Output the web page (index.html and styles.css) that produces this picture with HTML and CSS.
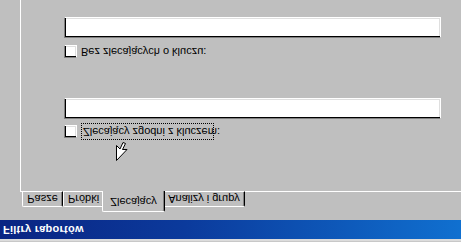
FILE: index.html
```html
<!DOCTYPE html>
<html lang="pl">
<head>
<meta charset="utf-8">
<title>Filtry raportów</title>
<link rel="stylesheet" href="styles.css">
</head>
<body>
<div class="screen">
  <div class="frame"></div>
  <div class="titlebar">Filtry raportów</div>
  <div class="tabs">
    <div class="tab t1">Pasze</div>
    <div class="tab t2">Próbki</div>
    <div class="tab sel">Zlecający</div>
    <div class="tab t4">Analizy i grupy</div>
  </div>
  <div class="panel">
    <div class="row row-a">
      <span class="check"></span>
      <span class="label focus">Zlecający zgodni z kluczem:</span>
    </div>
    <div class="field field-a"></div>
    <div class="row row-b">
      <span class="check"></span>
      <span class="label">Bez zlecających o kluczu:</span>
    </div>
    <div class="field field-b"></div>
    <svg class="cursor" width="13" height="20" viewBox="0 0 13 20">
      <path d="M0.5 0.5 L0.5 15.5 L4 12 L7 18.5 L9.5 17.5 L6.5 11.5 L11 11.5 Z" fill="#fff" stroke="#000" stroke-width="1" stroke-linejoin="miter"/>
    </svg>
  </div>
</div>
</body>
</html>
```

FILE: styles.css
```css
* { box-sizing: border-box; }
html, body {
  margin: 0;
  padding: 0;
  width: 461px;
  height: 242px;
  overflow: hidden;
  background: #c0c0c0;
}
.screen {
  width: 461px;
  height: 242px;
  display: flex;
  flex-direction: column;
  background: #bfbfbf;
  font-family: "Liberation Sans", Arial, sans-serif;
  font-size: 11px;
  color: #000;
  transform: scaleY(-1);
  overflow: hidden;
}
.frame {
  height: 3px;
  flex: none;
  background: #dcdcdc;
  border-top: 1px solid #c8c8c8;
}
.titlebar {
  height: 19px;
  flex: none;
  background: linear-gradient(to right, #0a2482 0%, #0b3a9c 40%, #1070d0 100%);
  color: #fff;
  font-weight: bold;
  font-size: 11px;
  letter-spacing: 0.25px;
  line-height: 19px;
  padding-left: 3px;
}
.tabs {
  flex: none;
  display: flex;
  align-items: flex-end;
  height: 21px;
  margin-top: 8px;
  padding-left: 22px;
  position: relative;
  z-index: 2;
  margin-bottom: -1px;
}
.tab {
  height: 16px;
  border-top: 1px solid #fff;
  border-left: 1px solid #fff;
  border-right: 1px solid #000;
  box-shadow: inset -1px 0 #808080;
  border-top-left-radius: 2px;
  border-top-right-radius: 2px;
  text-align: center;
  line-height: 14px;
  background: #bfbfbf;
  white-space: nowrap;
  border-bottom: 1px solid #fff;
}
.t1 { width: 41px; }
.t2 { width: 41px; }
.sel {
  height: 21px;
  width: 63px;
  margin-left: -2px;
  margin-right: -2px;
  border-bottom: none;
  line-height: 18px;
  position: relative;
  z-index: 3;
}
.t4 { width: 82px; }
.panel {
  flex: 1;
  margin-left: 20px;
  border-left: 1px solid #fff;
  border-top: 1px solid #fff;
  padding-left: 43px;
  padding-top: 51px;
  position: relative;
}
.row {
  display: flex;
  align-items: center;
  height: 17px;
}
.row-b { margin-top: 38px; }
.check {
  width: 13px;
  height: 13px;
  background: #fff;
  border-top: 1px solid #808080;
  border-left: 1px solid #808080;
  border-right: 1px solid #fff;
  border-bottom: 1px solid #fff;
  box-shadow: inset 1px 1px #000, inset -1px -1px #dfdfdf;
  flex: none;
}
.label {
  margin-left: 4px;
  padding: 0;
  height: 17px;
  line-height: 17px;
  white-space: nowrap;
}
.focus {
  border: 1px dotted #000;
  padding: 0 0 0 1px;
  line-height: 15px;
  width: 133px;
}
.field {
  width: 377px;
  height: 21px;
  background: #fff;
  border-top: 1px solid #808080;
  border-left: 1px solid #808080;
  border-right: 1px solid #fff;
  border-bottom: 1px solid #fff;
  box-shadow: inset 1px 1px #000, inset -1px -1px #dfdfdf;
}
.field-a { margin-top: 4px; }
.field-b { margin-top: 5px; }
.cursor {
  position: absolute;
  left: 95px;
  top: 30px;
}
```
